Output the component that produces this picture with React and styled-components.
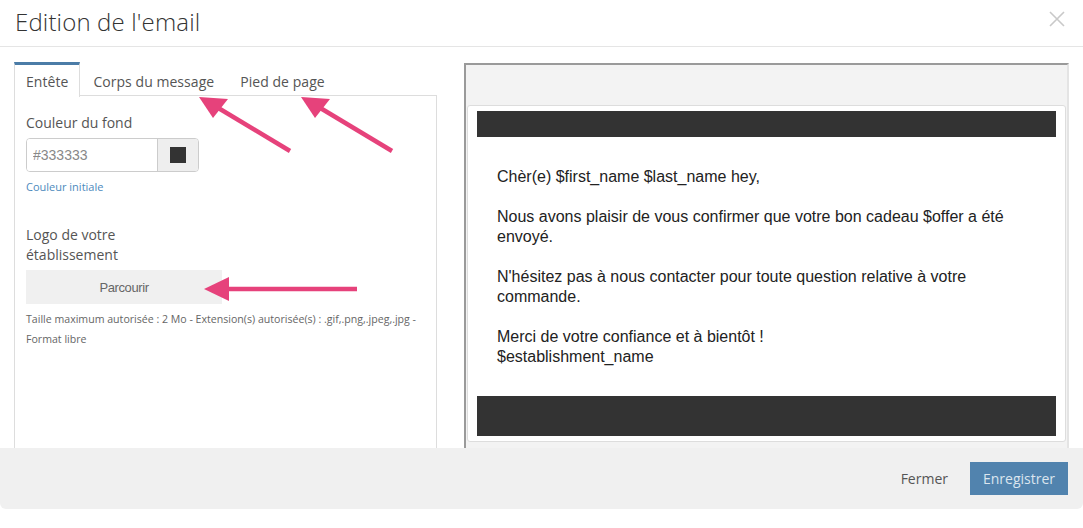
import React from "react";
import styled, { createGlobalStyle } from "styled-components";

const GlobalStyle = createGlobalStyle`
  html, body {
    margin: 0;
    padding: 0;
    background: #ffffff;
  }
  * {
    box-sizing: border-box;
  }
`;

const tabs = ["Entête", "Corps du message", "Pied de page"];

const paragraphs = [
  ["Chèr(e) $first_name $last_name hey,"],
  ["Nous avons plaisir de vous confirmer que votre bon cadeau $offer a été envoyé."],
  ["N'hésitez pas à nous contacter pour toute question relative à votre commande."],
  ["Merci de votre confiance et à bientôt !", "$establishment_name"],
];

export default function App() {
  return (
    <>
      <GlobalStyle />
      <Dialog>
        <Header>
          <Title>Edition de l'email</Title>
          <CloseButton aria-label="Fermer">
            <svg width="16" height="16" viewBox="0 0 16 16">
              <path d="M1 1 L15 15 M15 1 L1 15" stroke="#c9c9c9" strokeWidth="1.6" fill="none" />
            </svg>
          </CloseButton>
        </Header>

        <Body>
          <LeftColumn>
            <TabBar>
              {tabs.map((t, i) => (
                <Tab key={t} $active={i === 0}>
                  {t}
                </Tab>
              ))}
            </TabBar>
            <TabPane>
              <Label>Couleur du fond</Label>
              <InputGroup>
                <ColorInput defaultValue="#333333" />
                <Addon>
                  <Swatch $color="#333333" />
                </Addon>
              </InputGroup>
              <ResetLink href="#">Couleur initiale</ResetLink>

              <Label $narrow $spaced>
                Logo de votre établissement
              </Label>
              <BrowseButton type="button">Parcourir</BrowseButton>
              <HelpText>
                Taille maximum autorisée : 2 Mo - Extension(s) autorisée(s) : .gif,.png,.jpeg,.jpg - Format libre
              </HelpText>
            </TabPane>
          </LeftColumn>

          <Preview>
            <MailCard>
              <MailBand $height={26} />
              <MailText>
                {paragraphs.map((lines, i) => (
                  <p key={i}>
                    {lines.map((l, j) => (
                      <React.Fragment key={j}>
                        {j > 0 && <br />}
                        {l}
                      </React.Fragment>
                    ))}
                  </p>
                ))}
              </MailText>
              <MailBand $height={40} />
            </MailCard>
          </Preview>
        </Body>

        <Footer>
          <LinkButton type="button">Fermer</LinkButton>
          <PrimaryButton type="button">Enregistrer</PrimaryButton>
        </Footer>

        <Arrows width="1083" height="528" viewBox="0 0 1083 528">
          <g fill="#e6427b" stroke="#e6427b">
            <line x1="290" y1="151" x2="215" y2="106" strokeWidth="4.5" />
            <polygon points="199,97 228,99 213,118" stroke="none" />
            <line x1="392" y1="151" x2="317" y2="106" strokeWidth="4.5" />
            <polygon points="301,97 330,99 315,118" stroke="none" />
            <line x1="357" y1="289" x2="225" y2="289" strokeWidth="4.5" />
            <polygon points="204,289 229,277 229,301" stroke="none" />
          </g>
        </Arrows>
      </Dialog>
    </>
  );
}

const Dialog = styled.div`
  position: relative;
  width: 1083px;
  height: 528px;
  display: flex;
  flex-direction: column;
  font-family: "Open Sans", "Liberation Sans", sans-serif;
  color: #555;
`;

const Header = styled.div`
  height: 47px;
  flex: none;
  display: flex;
  align-items: center;
  justify-content: space-between;
  padding: 0 18px 0 15px;
  border-bottom: 1px solid #e5e5e5;
`;

const Title = styled.h4`
  margin: 0;
  font-size: 24px;
  font-weight: 300;
  color: #333;
  line-height: 1;
  padding-bottom: 3px;
  letter-spacing: 0.15px;
`;

const CloseButton = styled.button`
  border: 0;
  background: none;
  padding: 0;
  display: flex;
  margin-bottom: 8px;
`;

const Body = styled.div`
  height: 401px;
  flex: none;
  overflow: hidden;
  display: grid;
  grid-template-columns: 423px 605px;
  column-gap: 27px;
  padding: 15px 14px 0;
  align-items: start;
`;

const LeftColumn = styled.div`
  display: flex;
  flex-direction: column;
`;

const TabBar = styled.div`
  display: flex;
  border-bottom: 1px solid #ddd;
  height: 34px;
`;

const Tab = styled.div`
  padding: 0 ${({ $active }) => ($active ? "11px" : "12px")};
  display: flex;
  align-items: center;
  font-size: 14px;
  letter-spacing: 0.05px;
  color: #555;
  border-top: 3px solid ${({ $active }) => ($active ? "#4b7ca7" : "transparent")};
  border-left: 1px solid ${({ $active }) => ($active ? "#ddd" : "transparent")};
  border-right: 1px solid ${({ $active }) => ($active ? "#ddd" : "transparent")};
  background: ${({ $active }) => ($active ? "#fff" : "transparent")};
  margin-bottom: -1px;
  height: 35px;
`;

const TabPane = styled.div`
  border: 1px solid #ddd;
  border-top: 0;
  min-height: 420px;
  padding: 17px 11px;
  display: flex;
  flex-direction: column;
  align-items: flex-start;
`;

const Label = styled.label`
  font-size: 14px;
  line-height: 20px;
  color: #555;
  max-width: ${({ $narrow }) => ($narrow ? "110px" : "none")};
  margin-top: ${({ $spaced }) => ($spaced ? "30px" : "0")};
  margin-bottom: 5px;
`;

const InputGroup = styled.div`
  display: flex;
  width: 173px;
  height: 34px;
  border: 1px solid #ccc;
  border-radius: 4px;
  overflow: hidden;
`;

const ColorInput = styled.input`
  width: 130px;
  border: 0;
  padding: 0 6px;
  font-family: "Liberation Sans", Arial, sans-serif;
  font-size: 14px;
  color: #888;
  outline: none;
`;

const Addon = styled.div`
  flex: 1;
  background: #eee;
  border-left: 1px solid #ccc;
  display: flex;
  align-items: center;
  justify-content: center;
`;

const Swatch = styled.span`
  width: 16px;
  height: 16px;
  background: ${({ $color }) => $color};
`;

const ResetLink = styled.a`
  margin-top: 7px;
  font-size: 11px;
  line-height: 16px;
  color: #4d8abd;
  text-decoration: none;
`;

const BrowseButton = styled.button`
  width: 196px;
  height: 34px;
  border: 0;
  background: #f0f0f0;
  font-family: "Liberation Sans", Arial, sans-serif;
  font-size: 13px;
  color: #666;
  letter-spacing: -0.4px;
`;

const HelpText = styled.p`
  margin: 5px 0 0;
  font-size: 10.6px;
  line-height: 20px;
  color: #666;
`;

const Preview = styled.div`
  margin-top: 1px;
  height: 420px;
  background: #f3f3f3;
  border-top: 2px solid #9a9a9a;
  border-left: 2px solid #9a9a9a;
  border-right: 2px solid #e4e4e4;
  padding: 40px 1px 0;
`;

const MailCard = styled.div`
  background: #fff;
  border: 1px solid #ddd;
  border-radius: 3px;
  padding: 5px 9px;
`;

const MailBand = styled.div`
  height: ${({ $height }) => $height}px;
  background: #333;
`;

const MailText = styled.div`
  padding: 30px 20px 9px;
  font-family: "Liberation Sans", Arial, sans-serif;
  font-size: 16px;
  line-height: 20px;
  color: #222;

  p {
    margin: 0 0 20px;
  }
`;

const Footer = styled.div`
  height: 61px;
  flex: none;
  background: #f0f0f0;
  border-radius: 0 0 6px 6px;
  display: flex;
  align-items: center;
  justify-content: flex-end;
  gap: 10px;
  padding: 0 15px;
`;

const LinkButton = styled.button`
  border: 0;
  background: none;
  font-family: "Open Sans", sans-serif;
  font-size: 14px;
  color: #555;
  padding: 6px 12px;
`;

const PrimaryButton = styled.button`
  width: 98px;
  height: 33px;
  border: 0;
  background: #5183ae;
  color: #dbe5ee;
  font-family: "Open Sans", sans-serif;
  font-size: 14px;
`;

const Arrows = styled.svg`
  position: absolute;
  left: 0;
  top: 0;
  pointer-events: none;
`;
